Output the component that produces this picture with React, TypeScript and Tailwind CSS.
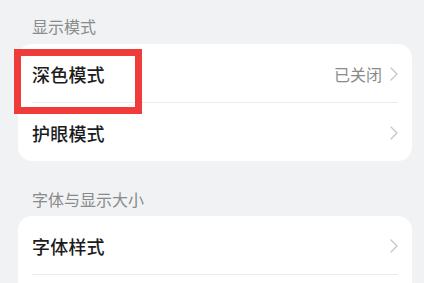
import React from "react";

const Chevron = () => (
  <svg width="8" height="14" viewBox="0 0 8 14" fill="none" className="shrink-0">
    <path d="M1 1 L7 7 L1 13" stroke="#c6c6c6" strokeWidth="1.3" strokeLinecap="round" strokeLinejoin="round" />
  </svg>
);

const Row = ({ title, value, divider }: { title: string; value?: string; divider?: boolean }) => (
  <div className="relative">
    <div className="h-[58px] flex items-center pl-[14px] pr-[14px] pt-[2px]">
      <span className="text-[18px] leading-none font-medium text-[#1c1c1c] tracking-[0.2px]">{title}</span>
      <div className="flex-1" />
      {value && <span className="text-[16px] leading-none text-[#8a8a8a] mr-[8px]">{value}</span>}
      <Chevron />
    </div>
    {divider && <div className="mx-[14px] h-px bg-[#ebebeb]" />}
  </div>
);

export default function App() {
  return (
    <div
      className="relative w-[424px] h-[283px] overflow-hidden bg-[#f1f2f4] pl-[18px] pr-[12px]"
      style={{ fontFamily: '"Noto Sans CJK SC", "Noto Sans", sans-serif' }}
    >
      <div className="h-[44px] flex items-center pt-[8px] pl-[14px]">
        <span className="text-[16px] leading-none text-[#8a8a8a]">显示模式</span>
      </div>
      <div className="bg-white rounded-[14px]">
        <Row title="深色模式" value="已关闭" divider />
        <Row title="护眼模式" />
      </div>
      <div className="h-[55px] flex items-center pt-[20px] pl-[14px]">
        <span className="text-[16px] leading-none text-[#8a8a8a]">字体与显示大小</span>
      </div>
      <div className="bg-white rounded-[14px]">
        <Row title="字体样式" divider />
        <div className="h-[58px]" />
      </div>
      <div className="absolute left-[14px] top-[49px] w-[128px] h-[65px] border-[7px] border-[#f03b3b]" />
    </div>
  );
}
